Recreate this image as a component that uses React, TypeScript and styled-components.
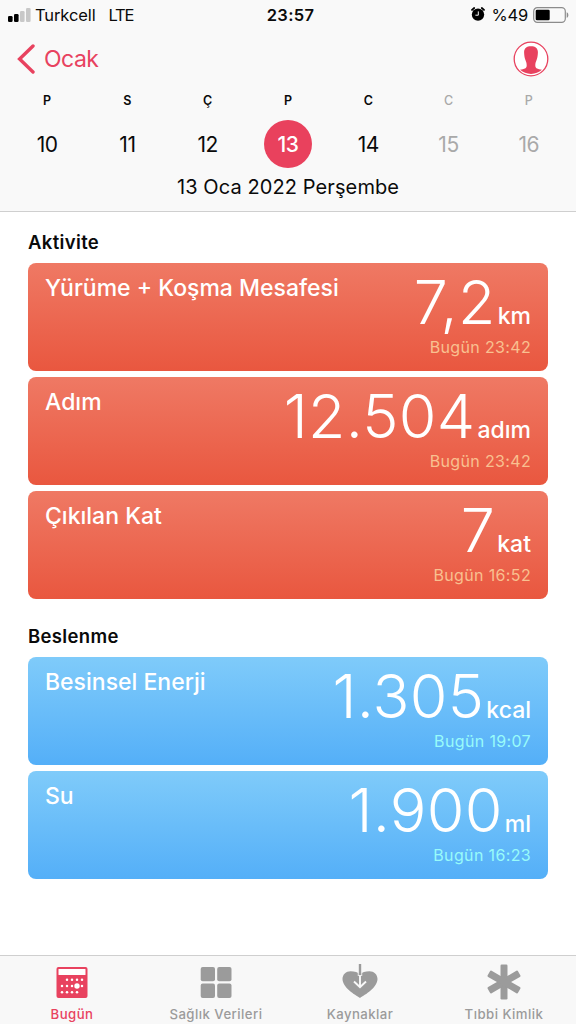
import React from "react";
import styled, { createGlobalStyle } from "styled-components";

const GlobalStyle = createGlobalStyle`
  * {
    box-sizing: border-box;
  }

  body {
    margin: 0;
    background: #fff;
    color: #0a0a0a;
    font-family: Inter, "Liberation Sans", sans-serif;
  }

  svg {
    display: block;
  }
`;

const Screen = styled.div`
  display: flex;
  flex-direction: column;
  width: 576px;
  height: 1024px;
  overflow: hidden;
`;

const Header = styled.header`
  height: 212px;
  background: #f9f9f9;
  border-bottom: 1px solid #cfcfcf;
`;

const StatusBar = styled.div`
  display: grid;
  grid-template-columns: 1fr auto 1fr;
  align-items: center;
  height: 30px;
  padding: 0 7px 0 8px;
  font-size: 16.5px;
  line-height: 30px;
`;

const StatusLeft = styled.div`
  display: flex;
  align-items: center;
`;

const StatusRight = styled.div`
  display: flex;
  align-items: center;
  justify-content: flex-end;
`;

const Carrier = styled.span`
  margin-left: 4px;
  letter-spacing: -0.1px;
`;

const Network = styled.span`
  margin-left: 13px;
  letter-spacing: -1.3px;
`;

const Clock = styled.span`
  margin-left: 4px;
  font-weight: 600;
  letter-spacing: 0.3px;
`;

const Percent = styled.span`
  margin: 0 5px 0 7px;
  letter-spacing: -0.2px;
`;

const NavBar = styled.div`
  display: flex;
  align-items: center;
  justify-content: space-between;
  height: 58px;
  padding: 0 27px 0 17px;
`;

const BackLink = styled.a`
  display: flex;
  align-items: center;
  gap: 9px;
  color: #e8425f;
  font-size: 23px;
  letter-spacing: -0.5px;
`;

const Week = styled.div`
  display: grid;
  grid-template-columns: repeat(7, 1fr);
  padding: 0 7px;
`;

const Day = styled.div<{ $muted?: boolean }>`
  display: flex;
  flex-direction: column;
  align-items: center;
  color: ${({ $muted }) => ($muted ? "#a9a9a9" : "#0a0a0a")};
`;

const DayLetter = styled.span<{ $muted?: boolean }>`
  height: 24px;
  font-size: 12.5px;
  font-weight: ${({ $muted }) => ($muted ? 500 : 600)};
  line-height: 25px;
`;

const DayNumber = styled.span<{ $selected?: boolean }>`
  width: 48px;
  height: 48px;
  margin-top: 8px;
  border-radius: 50%;
  background: ${({ $selected }) => ($selected ? "#e9415d" : "transparent")};
  color: ${({ $selected }) => ($selected ? "#fff" : "inherit")};
  font-size: 21px;
  font-weight: ${({ $selected }) => ($selected ? 500 : 400)};
  letter-spacing: -0.4px;
  line-height: 49px;
  text-align: center;
`;

const FullDate = styled.div`
  margin-top: 4px;
  font-size: 20px;
  letter-spacing: 0.1px;
  line-height: 30px;
  text-align: center;
`;

const Content = styled.main`
  flex: 1;
  padding: 18px 28px 0;
`;

const Section = styled.section`
  margin-bottom: 25px;
`;

const SectionTitle = styled.h2`
  margin: 0 0 9px;
  font-size: 18.5px;
  font-weight: 600;
  letter-spacing: 0.35px;
  line-height: 24px;
`;

const CardList = styled.div`
  display: grid;
  gap: 6px;
`;

const tones = {
  red: { from: "#ef7964", to: "#e9573f", time: "#f9c090" },
  blue: { from: "#7fcbfa", to: "#54aff8", time: "#98fbfa" },
};

type Tone = keyof typeof tones;

const Card = styled.article<{ $tone: Tone }>`
  display: flex;
  justify-content: space-between;
  height: 108px;
  padding: 0 17px;
  border-radius: 8px;
  background: linear-gradient(
    ${({ $tone }) => tones[$tone].from},
    ${({ $tone }) => tones[$tone].to}
  );
  color: #fff;
`;

const CardTitle = styled.h3`
  margin: 11px 0 0;
  font-size: 23px;
  font-weight: 500;
  line-height: 29px;
  white-space: nowrap;
`;

const Reading = styled.div`
  display: flex;
  flex-direction: column;
  align-items: flex-end;
`;

const Measure = styled.div`
  display: flex;
  align-items: baseline;
  height: 73px;
  line-height: 79px;
  white-space: nowrap;
`;

const Value = styled.span`
  font-size: 61px;
  font-weight: 300;
  letter-spacing: 0.3px;
`;

const Unit = styled.span`
  margin-left: 2px;
  font-size: 23px;
  font-weight: 500;
`;

const Time = styled.time<{ $tone: Tone }>`
  color: ${({ $tone }) => tones[$tone].time};
  font-size: 16px;
  letter-spacing: 0.35px;
  line-height: 22px;
`;

const TabBar = styled.nav`
  display: grid;
  grid-template-columns: repeat(4, 1fr);
  height: 69px;
  background: #f8f8f8;
  border-top: 1px solid #cfcfcf;
`;

const Tab = styled.a<{ $active?: boolean }>`
  display: flex;
  flex-direction: column;
  align-items: center;
  color: ${({ $active }) => ($active ? "#e8425f" : "#9b9b9b")};
  font-size: 13.2px;
  font-weight: 500;
  letter-spacing: 0.45px;
  line-height: 18px;
`;

const TabIcon = styled.span`
  height: 40px;
  margin: 6px 0 3px;
`;

const SignalIcon = () => (
  <svg width="23" height="14" viewBox="0 0 23 14">
    <rect x="0" y="8" width="4.6" height="6" rx="1.3" fill="#000" />
    <rect x="6" y="6" width="4.6" height="8" rx="1.3" fill="#000" />
    <rect x="12" y="3" width="4.6" height="11" rx="1.3" fill="#c8c8c8" />
    <rect x="18" y="0" width="4.6" height="14" rx="1.3" fill="#c8c8c8" />
  </svg>
);

const AlarmIcon = () => (
  <svg width="14" height="16" viewBox="0 0 14 16">
    <circle cx="7" cy="7.6" r="6.2" fill="#000" />
    <path
      d="M1 2.9 3.2 1M13 2.9 10.8 1"
      stroke="#000"
      strokeWidth="1.8"
      strokeLinecap="round"
    />
    <path d="M7.3 4.4v3.8H4.4" fill="none" stroke="#f9f9f9" strokeWidth="1" />
  </svg>
);

const BatteryIcon = () => (
  <svg width="36" height="16" viewBox="0 0 36 16">
    <rect x=".7" y=".7" width="31.6" height="14.6" rx="3.6" fill="none" stroke="#8c8c8c" strokeWidth="1.2" />
    <rect x="2.7" y="2.7" width="14" height="10.6" rx="1.4" fill="#000" />
    <path d="M33.7 5.2c2.2.8 2.2 4.8 0 5.6z" fill="#8c8c8c" />
  </svg>
);

const BackIcon = () => (
  <svg width="18" height="30" viewBox="0 0 18 30" fill="none">
    <path d="M16 2 2.6 15 16 28" stroke="#e8425f" strokeWidth="3.4" strokeLinecap="round" />
  </svg>
);

const ProfileIcon = () => (
  <svg width="36" height="36" viewBox="0 0 36 36">
    <circle cx="18" cy="18" r="16.8" fill="#fff" stroke="#e8425f" strokeWidth="1.3" />
    <path
      d="M18 5.2C22.3 5.2 25 7.2 24.9 11.5C24.8 14.5 24.3 17.5 23.4 19.6C22.7 21.2 22.3 22.5 22.3 24.6C22.3 27.6 24.5 28 29 28.8A16.8 16.8 0 0 1 7 28.8C11.5 28 13.7 27.6 13.7 24.6C13.7 22.5 13.3 21.2 12.6 19.6C11.7 17.5 11.2 14.5 11.1 11.5C11 7.2 13.7 5.2 18 5.2Z"
      fill="#e8425f"
    />
  </svg>
);

const calendarDots = [
  [11, 17.8], [16, 17.8], [21, 17.8], [26, 17.8],
  [6, 24], [11, 24], [16, 24], [26, 24],
  [6, 30.2], [11, 30.2], [16, 30.2], [21, 30.2],
];

const CalendarIcon = () => (
  <svg width="32" height="40" viewBox="0 0 32 40">
    <rect x=".5" y="5" width="31" height="31" rx="2" fill="#e8425f" />
    <rect x="2.5" y="7" width="27" height="6" rx=".6" fill="#fff" />
    {calendarDots.map(([x, y]) => (
      <circle key={`${x}-${y}`} cx={x} cy={y} r="1.25" fill="#fff" />
    ))}
    <circle cx="21" cy="24" r="2.7" fill="#fff" />
  </svg>
);

const GridIcon = () => (
  <svg width="32" height="40" viewBox="0 0 32 40" fill="#9b9b9b">
    <rect x=".7" y="5" width="14.3" height="14.3" rx="2" />
    <rect x="17.2" y="5" width="14.3" height="14.3" rx="2" />
    <rect x=".7" y="21.6" width="14.3" height="14.3" rx="2" />
    <rect x="17.2" y="21.6" width="14.3" height="14.3" rx="2" />
  </svg>
);

const SourcesIcon = () => (
  <svg width="36" height="40" viewBox="0 0 36 40" fill="none">
    <path
      d="M18 36C13 33 .5 25.5.5 17.1.5 12.5 4 9.3 8.6 9.3c4 0 7.4 1.2 9.4 3.2 2-2 5.4-3.2 9.4-3.2 4.6 0 8.1 3.2 8.1 7.8C35.5 25.5 23 33 18 36z"
      fill="#9b9b9b"
    />
    <path d="M18 13v12.5M12 19.500l6 5.800 6-5.800" stroke="#f8f8f8" strokeWidth="1.9" />
    <path d="M16.3 8v6M19.7 8v6" stroke="#f8f8f8" strokeWidth="1" />
    <path d="M18 2v11" stroke="#9b9b9b" strokeWidth="2.4" />
  </svg>
);

const MedicalIdIcon = () => (
  <svg width="34" height="40" viewBox="0 0 34 40" fill="#9b9b9b">
    {[0, 60, 120].map((angle) => (
      <rect
        key={angle}
        x="13.5"
        y="2.5"
        width="7"
        height="35"
        rx="1.2"
        transform={`rotate(${angle} 17 20)`}
      />
    ))}
  </svg>
);

const days = [
  { letter: "P", number: 10 },
  { letter: "S", number: 11 },
  { letter: "Ç", number: 12 },
  { letter: "P", number: 13, selected: true },
  { letter: "C", number: 14 },
  { letter: "C", number: 15, muted: true },
  { letter: "P", number: 16, muted: true },
];

const sections: {
  title: string;
  tone: Tone;
  items: { name: string; value: string; unit: string; time: string }[];
}[] = [
  {
    title: "Aktivite",
    tone: "red",
    items: [
      { name: "Yürüme + Koşma Mesafesi", value: "7,2", unit: "km", time: "23:42" },
      { name: "Adım", value: "12.504", unit: "adım", time: "23:42" },
      { name: "Çıkılan Kat", value: "7", unit: "kat", time: "16:52" },
    ],
  },
  {
    title: "Beslenme",
    tone: "blue",
    items: [
      { name: "Besinsel Enerji", value: "1.305", unit: "kcal", time: "19:07" },
      { name: "Su", value: "1.900", unit: "ml", time: "16:23" },
    ],
  },
];

const tabs = [
  { label: "Bugün", Icon: CalendarIcon, active: true },
  { label: "Sağlık Verileri", Icon: GridIcon },
  { label: "Kaynaklar", Icon: SourcesIcon },
  { label: "Tıbbi Kimlik", Icon: MedicalIdIcon },
];

const App = () => {
  return (
    <Screen>
      <GlobalStyle />
      <Header>
        <StatusBar>
          <StatusLeft>
            <SignalIcon />
            <Carrier>Turkcell</Carrier>
            <Network>LTE</Network>
          </StatusLeft>
          <Clock>23:57</Clock>
          <StatusRight>
            <AlarmIcon />
            <Percent>%49</Percent>
            <BatteryIcon />
          </StatusRight>
        </StatusBar>

        <NavBar>
          <BackLink>
            <BackIcon />
            Ocak
          </BackLink>
          <ProfileIcon />
        </NavBar>

        <Week>
          {days.map((day) => (
            <Day key={day.number} $muted={day.muted}>
              <DayLetter $muted={day.muted}>{day.letter}</DayLetter>
              <DayNumber $selected={day.selected}>{day.number}</DayNumber>
            </Day>
          ))}
        </Week>
        <FullDate>13 Oca 2022 Perşembe</FullDate>
      </Header>

      <Content>
        {sections.map(({ title, tone, items }) => (
          <Section key={title}>
            <SectionTitle>{title}</SectionTitle>
            <CardList>
              {items.map((item) => (
                <Card key={item.name} $tone={tone}>
                  <CardTitle>{item.name}</CardTitle>
                  <Reading>
                    <Measure>
                      <Value>{item.value}</Value>
                      <Unit>{item.unit}</Unit>
                    </Measure>
                    <Time $tone={tone}>Bugün {item.time}</Time>
                  </Reading>
                </Card>
              ))}
            </CardList>
          </Section>
        ))}
      </Content>

      <TabBar>
        {tabs.map(({ label, Icon, active }) => (
          <Tab key={label} $active={active}>
            <TabIcon>
              <Icon />
            </TabIcon>
            {label}
          </Tab>
        ))}
      </TabBar>
    </Screen>
  );
};

export default App;
